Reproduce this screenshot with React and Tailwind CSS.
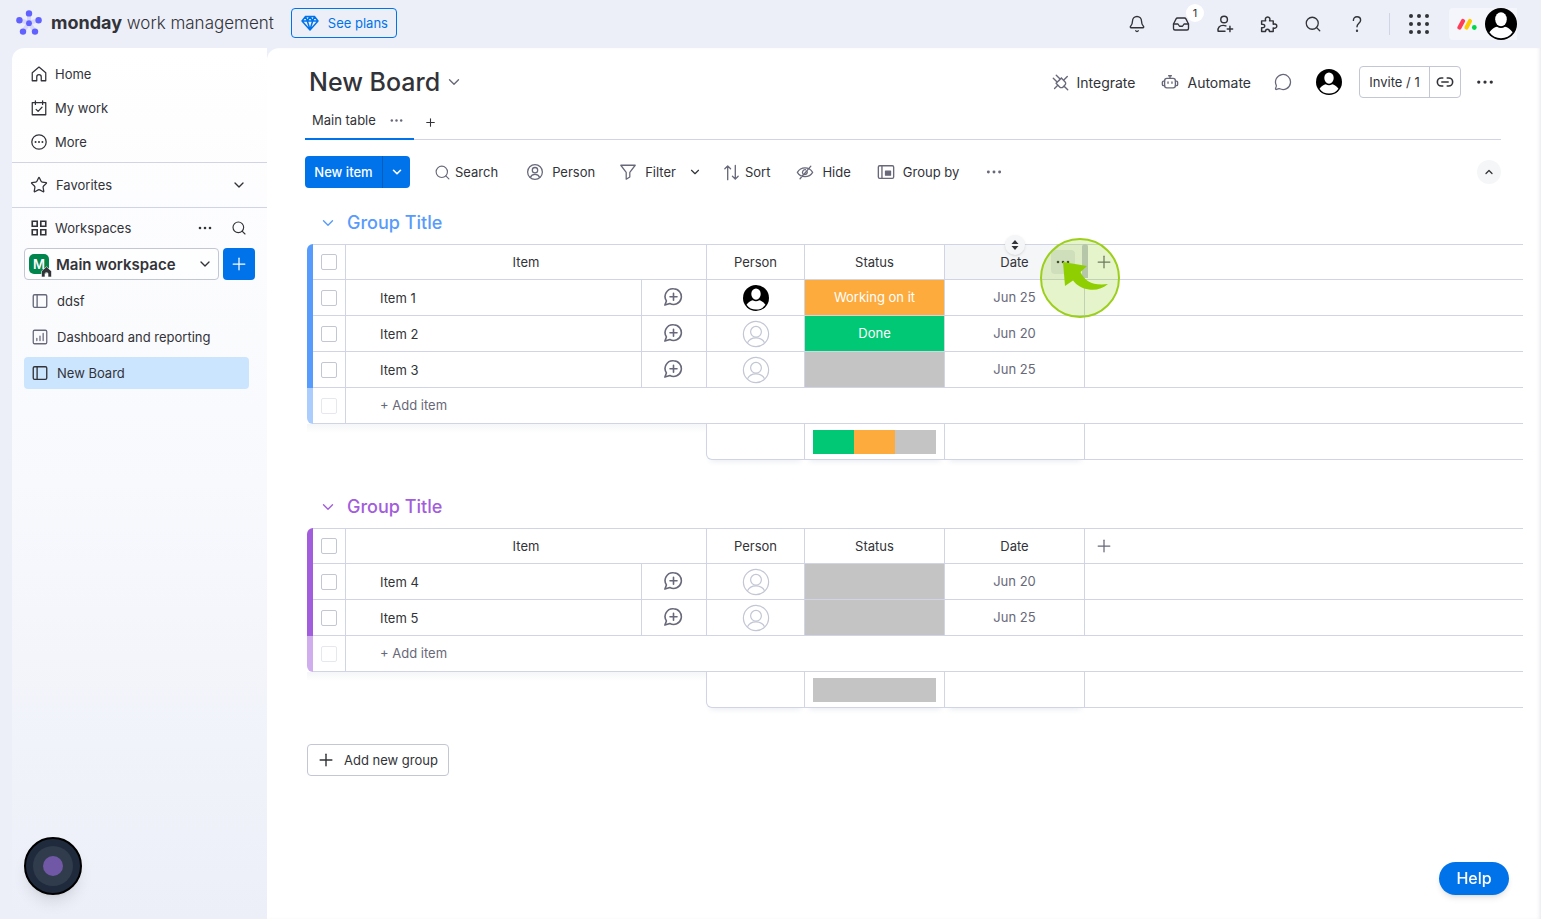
import React, { useState } from 'react';
import { Bell, ChevronDown, ChevronUp, Inbox, MessageCircle, Plus, Search, Star } from 'lucide-react';

const GROUPS = [
  {
    id: 'g1',
    headClass: 'text-[#579bfc]',
    barClass: 'bg-[#579bfc]',
    barLightClass: 'bg-[#abcdfd]',
    activeDate: true,
    items: [
      { name: 'Item 1', person: true, status: 'Working on it', date: 'Jun 25' },
      { name: 'Item 2', person: false, status: 'Done', date: 'Jun 20' },
      { name: 'Item 3', person: false, status: '', date: 'Jun 25' },
    ],
    summary: ['bg-[#00c875]', 'bg-[#fdab3d]', 'bg-[#c4c4c4]'],
  },
  {
    id: 'g2',
    headClass: 'text-[#a25ddc]',
    barClass: 'bg-[#a25ddc]',
    barLightClass: 'bg-[#d0aeed]',
    activeDate: false,
    items: [
      { name: 'Item 4', person: false, status: '', date: 'Jun 20' },
      { name: 'Item 5', person: false, status: '', date: 'Jun 25' },
    ],
    summary: ['bg-[#c4c4c4]'],
  },
];

const STATUS_CLASSES = {
  'Working on it': 'bg-[#fdab3d]',
  Done: 'bg-[#00c875]',
  '': 'bg-[#c4c4c4]',
};

function Svg({ size = 18, width = 1.4, className = '', children }) {
  return (
    <svg
      width={size}
      height={size}
      viewBox="0 0 20 20"
      fill="none"
      stroke="currentColor"
      strokeWidth={width}
      strokeLinecap="round"
      strokeLinejoin="round"
      className={`shrink-0 ${className}`}
      aria-hidden="true"
    >
      {children}
    </svg>
  );
}

function Dots({ size = 16, className = '' }) {
  return (
    <svg width={size} height={size} viewBox="0 0 16 16" fill="currentColor" className={`shrink-0 ${className}`} aria-hidden="true">
      <circle cx="3" cy="8" r="1.3" />
      <circle cx="8" cy="8" r="1.3" />
      <circle cx="13" cy="8" r="1.3" />
    </svg>
  );
}

function Avatar({ className = 'size-8' }) {
  return (
    <svg viewBox="0 0 32 32" className={`shrink-0 ${className}`} aria-hidden="true">
      <circle cx="16" cy="16" r="16" fill="#000" />
      <ellipse cx="16" cy="11.2" rx="5.8" ry="7" fill="#fff" />
      <path d="M4.400 24.300C6.500 21 9.500 19.200 12 18.700c2.600 1.700 5.400 1.700 8 0 2.500.5 5.500 2.300 7.600 5.600A14.300 14.300 0 0 1 16 30.300 14.300 14.300 0 0 1 4.400 24.300Z" fill="#fff" />
    </svg>
  );
}

function EmptyPerson() {
  return (
    <svg viewBox="0 0 28 28" className="size-7" fill="none" stroke="#c3c6d4" strokeWidth="1.2" aria-hidden="true">
      <circle cx="14" cy="14" r="12.6" />
      <circle cx="14" cy="11.800" r="5.400" />
      <path d="M5.500 22.800c1.600-3.400 4.800-5 8.500-5s6.900 1.600 8.500 5" />
    </svg>
  );
}

function BoardIcon({ className }) {
  return (
    <Svg width={1.5} className={className}>
      <rect x="2.500" y="3" width="15" height="14" rx="1.500" />
      <path d="M6.800 3v14" />
    </Svg>
  );
}

function TopBar() {
  return (
    <header className="flex h-12 shrink-0 items-center pl-4 pr-6">
      <div className="flex items-center pb-0.5">
        <svg width="26" height="26" viewBox="0 0 26 26" className="mr-[9px] shrink-0" aria-hidden="true">
          <g stroke="#d5d6fa" strokeWidth="4" strokeLinecap="round">
            <path d="M13 13V3.500M13 13 3.500 10M13 13l9.500-3M13 13l-6 8.500M13 13l6 8.500" />
          </g>
          <g fill="#6161ff">
            <circle cx="13" cy="3.400" r="3.200" />
            <circle cx="3.400" cy="10.300" r="3.200" />
            <circle cx="22.600" cy="10.300" r="3.200" />
            <circle cx="13" cy="13.200" r="2.900" />
            <circle cx="7" cy="21.600" r="3.200" />
            <circle cx="19" cy="21.600" r="3.200" />
          </g>
        </svg>
        <span className="text-[17px] font-light text-[#323338]">
          <strong className="text-[18px] font-bold">monday</strong> work management
        </span>
        <button className="ml-[17px] flex h-[30px] items-center gap-2 rounded border border-[#0073ea] px-2 text-[13px] text-[#0073ea]">
          <Svg size={20} width={1.5}>
            <path d="M5.500 3.500h9l3.500 4.500-8 9-8-9zM2 8h16M7.300 8 10 16.500 12.700 8M5.500 3.500 7.300 8 10 3.500 12.700 8l1.800-4.500" />
          </Svg>
          See plans
        </button>
      </div>

      <nav className="ml-auto flex items-center text-[#323338]">
        <button aria-label="Notifications" className="flex w-11 justify-center"><Bell size={18} strokeWidth={1.800} /></button>
        <button aria-label="Inbox" className="relative flex w-11 justify-center">
          <Inbox size={18} strokeWidth={1.800} />
          <span className="absolute -top-[11px] left-[27px] flex size-[18px] items-center justify-center rounded-full bg-white text-[11px]">1</span>
        </button>
        <button aria-label="Invite members" className="flex w-11 justify-center">
          <Svg size={18} width={1.600}>
            <circle cx="9" cy="5" r="3.700" />
            <path d="M10 18H2.300c-.6-3.600 1.600-6.500 5.700-6.500 1.200 0 2.200.2 3 .6M15.500 12.500v6M12.500 15.500h6" />
          </Svg>
        </button>
        <button aria-label="Apps" className="flex w-11 justify-center">
          <Svg size={18} width={1.600}>
            <path d="M1.800 6.500h4.500c-.8-2.200 0-4.300 2.200-4.300s3 2.100 2.200 4.300h4v3.800c2-.8 4 0 4 2s-2 2.800-4 2v4h-4.200c0-1.600-.8-2.500-2.200-2.500s-2.200.9-2.200 2.500H1.800v-4.200c2.200.2 3.500-.5 3.500-1.900s-1.300-2.100-3.500-1.900z" />
          </Svg>
        </button>
        <button aria-label="Search everything" className="flex w-11 justify-center"><Search size={18} strokeWidth={1.700} /></button>
        <button aria-label="Help center" className="flex w-11 justify-center">
          <Svg size={18} width={1.600}>
            <path d="M6 6c0-2.500 1.700-4 4-4s4 1.600 4 3.800c0 3.300-4 3.500-4 7.200" />
            <circle cx="10" cy="17.500" r=".5" fill="currentColor" />
          </Svg>
        </button>
        <span className="ml-2.5 mr-[7px] h-[22px] w-px bg-[#d0d4e4]" />
        <button aria-label="Products" className="flex w-11 justify-center">
          <svg width="20" height="20" viewBox="0 0 20 20" fill="currentColor" aria-hidden="true">
            {[2, 10, 18].map((x) => [2, 10, 18].map((y) => <circle key={`${x}-${y}`} cx={x} cy={y} r="2" />))}
          </svg>
        </button>
        <button aria-label="Account" className="ml-2 flex h-8 items-center gap-2 rounded-l bg-[#f5f6fb] pl-2">
          <svg width="20" height="14" viewBox="0 0 20 14" aria-hidden="true">
            <path d="M2.500 10.500 6 4" stroke="#ff3d57" strokeWidth="4.200" strokeLinecap="round" />
            <path d="M9.500 10.500 13 4" stroke="#ffcb00" strokeWidth="4.200" strokeLinecap="round" />
            <circle cx="17.300" cy="10.500" r="2.400" fill="#00d647" />
          </svg>
          <Avatar className="size-8" />
        </button>
      </nav>
    </header>
  );
}

function Sidebar() {
  return (
    <aside className="ml-3 w-[255px] shrink-0 rounded-tl-xl bg-gradient-to-b from-white via-[#f8f9fd] to-[#eceff8] pt-[9px] text-[13px] text-[#323338]">
      <nav className="mb-[3px] pl-[18px]">
        <a href="#home" className="flex h-[34px] items-center gap-[7px]">
          <Svg><path d="M2.500 8.500 10 2.300l7.500 6.200v9h-5v-4.300a2.500 2.500 0 0 0-5 0v4.300h-5z" /></Svg>
          Home
        </a>
        <a href="#my-work" className="flex h-[34px] items-center gap-[7px]">
          <Svg><path d="M2.500 4h15v13.500h-15zM6 2v4M14 2v4M6.800 11.500l2.200 2.200 4.300-4.500" /></Svg>
          My work
        </a>
        <a href="#more" className="flex h-[34px] items-center gap-[7px]">
          <Svg>
            <circle cx="10" cy="10" r="8" />
            <g fill="currentColor" stroke="none">
              <circle cx="6.200" cy="10" r="1.100" />
              <circle cx="10" cy="10" r="1.100" />
              <circle cx="13.800" cy="10" r="1.100" />
            </g>
          </Svg>
          More
        </a>
      </nav>

      <button className="flex h-[46px] w-full items-center gap-2 border-y border-[#d0d4e4] pl-[18px] pr-5">
        <Star size={18} strokeWidth={1.700} />
        Favorites
        <ChevronDown size={16} strokeWidth={2} className="ml-auto" />
      </button>

      <div className="flex h-10 items-center pl-[18px] pr-5">
        <Svg width={1.800}>
          <path d="M2.500 2.500h5.500v5.500H2.500zM12 2.500h5.500v5.500H12zM2.500 12h5.500v5.500H2.500zM12 12h5.500v5.500H12z" strokeLinejoin="miter" />
        </Svg>
        <span className="ml-[7px]">Workspaces</span>
        <button aria-label="Workspace options" className="ml-auto"><Dots /></button>
        <button aria-label="Search workspace" className="ml-[18px]"><Search size={16} strokeWidth={1.700} /></button>
      </div>

      <div className="flex gap-1 px-3">
        <button className="flex h-8 w-[195px] items-center rounded border border-[#c3c6d4] bg-white/60 pl-1 pr-[5px]">
          <span className="relative flex size-5 items-center justify-center rounded-[5px] bg-[#00854d] text-[13px] font-semibold text-white">
            M
            <svg width="11" height="11" viewBox="0 0 11 11" className="absolute -bottom-[3px] -right-[3px]" aria-hidden="true">
              <path d="M.5 5.200 5.500.7l5 4.500V11H7V8a1.500 1.500 0 0 0-3 0v3H.5z" fill="#323338" stroke="#fff" strokeWidth=".6" />
            </svg>
          </span>
          <span className="ml-[7px] text-[15px] font-semibold">Main workspace</span>
          <ChevronDown size={16} strokeWidth={2} className="ml-auto" />
        </button>
        <button aria-label="Add to workspace" className="flex size-8 items-center justify-center rounded bg-[#0073ea] text-white">
          <Plus size={20} strokeWidth={1.500} />
        </button>
      </div>

      <nav className="mt-[5px] flex flex-col gap-1 pl-3 pr-[18px]">
        <a href="#ddsf" className="flex h-8 items-center gap-2 rounded pl-[7px]"><BoardIcon className="text-[#676879]" />ddsf</a>
        <a href="#dashboard" className="flex h-8 items-center gap-2 rounded pl-[7px]">
          <Svg className="text-[#676879]">
            <rect x="2.500" y="2.500" width="15" height="15" rx="1.500" />
            <path d="M6.500 14v-2.500M10 14V9M13.500 14V6" />
          </Svg>
          Dashboard and reporting
        </a>
        <a href="#new-board" className="flex h-8 items-center gap-2 rounded bg-[#cce5ff] pl-[7px]"><BoardIcon />New Board</a>
      </nav>
    </aside>
  );
}

function BoardHeader() {
  return (
    <div className="flex h-[60px] items-center pl-[42px] pr-[46px] pt-2 text-[#323338]">
      <h1 className="text-[25px] font-medium">New Board</h1>
      <ChevronDown size={18} strokeWidth={1.800} className="ml-[5px] text-[#676879]" />
      <button className="ml-auto flex items-center gap-2 text-sm leading-[19px]">
        <Svg size={17} width={1.600} className="text-[#676879]">
          <path d="M11 4.800 15.200 9c1.200 1.200 1.200 2.800 0 4l-2.200 2.200c-1.200 1.200-2.800 1.200-4 0L4.800 11zM4.800 11l3-3M11 4.800 8 8M5 1.500l4.500 4.500M1.500 5 6 9.500M14.500 6.500 18 3M3 17l3.500-3.500M14 14l4.500 4.500" />
        </Svg>
        Integrate
      </button>
      <button className="ml-[26px] flex items-center gap-2 text-sm leading-[19px]">
        <Svg width={1.500} className="text-[#676879]">
          <rect x="4" y="6" width="12" height="10.500" rx="2.500" />
          <path d="M10 3v3M8.500 3h3M4 9H2.800c-.8 0-1.300.5-1.300 1.300v2.400c0 .8.500 1.300 1.300 1.300H4M16 9h1.200c.8 0 1.300.5 1.300 1.300v2.400c0 .8-.5 1.300-1.300 1.300H16M7.800 10v1.500M12.200 10v1.500" />
        </Svg>
        Automate
      </button>
      <button aria-label="Discussion" className="ml-[23px] text-[#676879]"><MessageCircle size={18} strokeWidth={1.700} /></button>
      <button aria-label="Owner" className="ml-6"><Avatar className="size-[26px]" /></button>
      <div className="ml-[17px] flex h-8 items-center rounded border border-[#c3c6d4] text-[13px]">
        <button className="flex h-full w-[70px] items-center justify-center border-r border-[#c3c6d4]">Invite / 1</button>
        <button aria-label="Copy link" className="flex h-full w-[30px] items-center justify-center">
          <Svg width={1.800}>
            <path d="M7.500 5.500H6a4.500 4.500 0 0 0 0 9h1.500M12.500 5.500H14a4.500 4.500 0 0 1 0 9h-1.500M6.500 10h7" />
          </Svg>
        </button>
      </div>
      <button aria-label="Board options" className="ml-3.5"><Dots size={20} /></button>
    </div>
  );
}

function ToolButton({ icon, label, wide }) {
  return (
    <button className={`flex items-center ${wide ? 'gap-2' : 'gap-1'}`}>
      {icon}
      {label}
    </button>
  );
}

function Toolbar() {
  return (
    <div className="flex h-8 items-center text-[13px] leading-5 text-[#323338]">
      <div className="flex h-8 overflow-hidden rounded bg-[#0073ea] text-white">
        <button className="w-[77px] font-medium">New item</button>
        <button aria-label="More item types" className="flex w-7 items-center justify-center border-l border-[#0060b9]">
          <ChevronDown size={14} strokeWidth={2.800} />
        </button>
      </div>
      <div className="ml-6 flex items-center gap-7">
        <ToolButton label="Search" icon={<Search size={17} strokeWidth={1.600} className="text-[#676879]" />} />
        <ToolButton
          wide
          label="Person"
          icon={
            <Svg className="text-[#676879]">
              <circle cx="10" cy="10" r="8.200" />
              <circle cx="10" cy="8" r="3" />
              <path d="M4.800 16c1-2.300 2.800-3.300 5.200-3.300s4.200 1 5.200 3.300" />
            </Svg>
          }
        />
        <div className="-ml-1 flex items-center">
          <ToolButton
            wide
            label="Filter"
            icon={<Svg className="text-[#676879]"><path d="M2 2.500h16l-6 8v5l-4 2.500v-7.500z" /></Svg>}
          />
          <button aria-label="Filter options" className="ml-3"><ChevronDown size={14} strokeWidth={2} /></button>
        </div>
      </div>
      <div className="ml-5 flex items-center gap-[26px]">
        <ToolButton
          label="Sort"
          icon={<Svg size={19} className="text-[#676879]"><path d="M6 17.500V3M3 6l3-3 3 3M14 2.500V17M11 14l3 3 3-3" /></Svg>}
        />
        <ToolButton
          wide
          label="Hide"
          icon={
            <Svg className="text-[#676879]">
              <path d="M1.500 10.500C3.500 7.200 6.500 5.500 10 5.500s6.500 1.700 8.500 5c-2 3.300-5 4.700-8.500 4.700s-6.500-1.400-8.500-4.700zM4.500 17.500 16.500 3.500M10.500 7.500a3 3 0 0 0-2.700 4.800M12.500 9.500a3 3 0 0 1-3 3.500" />
            </Svg>
          }
        />
        <ToolButton
          wide
          label="Group by"
          icon={
            <Svg width={1.500} className="text-[#676879]">
              <rect x="1.500" y="3" width="17" height="14" rx="1.500" />
              <path d="M5.500 3v14" />
              <rect x="9.500" y="9" width="5.500" height="4.500" fill="currentColor" />
            </Svg>
          }
        />
        <button aria-label="More tools" className="text-[#676879]"><Dots size={18} /></button>
      </div>
      <button aria-label="Collapse header" className="ml-auto flex size-6 items-center justify-center rounded-full bg-[#f5f6f8]">
        <ChevronUp size={12} strokeWidth={2.500} />
      </button>
    </div>
  );
}

function Checkbox({ label, faded }) {
  return (
    <input
      type="checkbox"
      aria-label={label}
      disabled={faded}
      className={`mx-auto block size-4 appearance-none rounded-[2px] border border-[#c3c6d4] bg-white ${faded ? 'opacity-40' : ''}`}
    />
  );
}

function ClickMarker() {
  return (
    <span className="pointer-events-none absolute -top-[7px] left-[95px] z-20 flex size-20 items-center justify-center rounded-full border-2 border-[#9ccf1c] bg-[#82c800]/20">
      <svg width="80" height="80" viewBox="0 0 80 80" className="shrink-0" aria-hidden="true">
        <path d="M23 24 47 28l-6.500 6c4 9.500 13 14 27.500 12-5 4.500-12 6.500-19 5.500-7-1-12-4-16-9L25 48z" fill="#8fce00" />
      </svg>
    </span>
  );
}

const line = 'border-[#d0d4e4]';
const footShadow = 'shadow-[0_5px_6px_-4px_#e6e9ef]';

function GroupTable({ group }) {
  const [open, setOpen] = useState(true);

  return (
    <section className="mb-7">
      <h2 className={`mb-1 flex h-9 items-center gap-2.5 pl-3 pt-0.5 text-[18px] font-medium leading-5 ${group.headClass}`}>
        <button aria-label="Collapse group" onClick={() => setOpen(!open)}>
          <ChevronDown size={18} strokeWidth={1.800} />
        </button>
        Group Title
      </h2>
      {open && (
        <table className="w-full table-fixed border-separate border-spacing-0 text-center text-[13px] text-[#323338]">
          <colgroup>
            <col className="w-1.5" />
            <col className="w-[33px]" />
            <col className="w-[296px]" />
            <col className="w-[65px]" />
            <col className="w-[98px]" />
            <col className="w-[140px]" />
            <col className="w-[140px]" />
            <col />
          </colgroup>
          <thead>
            <tr className="h-9 [&>th]:p-0 [&>th]:font-normal">
              <th className={`rounded-tl-md ${group.barClass}`} />
              <th className={`border-y border-r ${line}`}><Checkbox label="Select all items" /></th>
              <th colSpan={2} className={`border-y border-r ${line}`}>Item</th>
              <th className={`border-y border-r ${line}`}>Person</th>
              <th className={`border-y border-r ${line}`}>Status</th>
              <th className={`relative border-y border-r ${line} ${group.activeDate ? 'bg-[#f5f6f8]' : ''}`}>
                Date
                {group.activeDate && (
                  <>
                    <button aria-label="Sort by date" className="absolute -top-[10px] left-[60px] flex size-5 items-center justify-center rounded-full bg-[#f5f6f8] shadow-sm">
                      <svg width="8" height="10" viewBox="0 0 8 10" fill="currentColor" aria-hidden="true">
                        <path d="M4 0 7.500 4h-7zM4 10 .5 6h7z" />
                      </svg>
                    </button>
                    <button aria-label="Column options" className="absolute right-[9px] top-[5px] flex size-6 items-center justify-center rounded bg-[#e4e5ea]">
                      <Dots />
                    </button>
                    <span className="absolute -right-1 -top-px h-[34px] w-1.5 rounded-t bg-[#c3c6d4]" />
                    <ClickMarker />
                  </>
                )}
              </th>
              <th className={`border-y ${line}`}>
                <button aria-label="Add column" className="ml-[9px] block text-[#676879]"><Plus size={20} strokeWidth={1.500} /></button>
              </th>
            </tr>
          </thead>
          <tbody>
            {group.items.map((item) => (
              <tr key={item.name} className="h-9 [&>td]:p-0">
                <td className={group.barClass} />
                <td className={`border-b border-r ${line}`}><Checkbox label={`Select ${item.name}`} /></td>
                <td className={`border-b border-r text-left ${line}`}><div className="pl-[34px] pt-0.5">{item.name}</div></td>
                <td className={`border-b border-r ${line}`}>
                  <button aria-label={`Start a conversation on ${item.name}`} className="mx-auto block pb-0.5 pr-0.5 text-[#676879]">
                    <Svg size={20} width={1.600}>
                      <path d="M10.500 1.800a7.800 7.800 0 1 1-3.600 14.700l-5 1.600 1.500-4.200A7.800 7.800 0 0 1 10.500 1.800zM10.500 6.200v7M7 9.700h7" />
                    </Svg>
                  </button>
                </td>
                <td className={`border-b border-r ${line}`}>
                  <span className="flex justify-center">{item.person ? <Avatar className="size-[26px]" /> : <EmptyPerson />}</span>
                </td>
                <td className={`border-b border-r text-white ${line} ${STATUS_CLASSES[item.status]}`}>{item.status}</td>
                <td className={`border-b border-r text-[#676879] ${line}`}>{item.date}</td>
                <td className={`border-b ${line}`} />
              </tr>
            ))}
            <tr className="h-9 [&>td]:p-0">
              <td className={`rounded-bl-md ${group.barLightClass}`} />
              <td className={`border-b border-r ${line}`}><Checkbox label="New item" faded /></td>
              <td colSpan={6} className={`border-b text-left ${line}`}>
                <button className="pl-[34px] text-[#676879]">+ Add item</button>
              </td>
            </tr>
          </tbody>
          <tfoot>
            <tr className="h-9 [&>td]:p-0">
              <td colSpan={4} className="bg-gradient-to-b from-[#f5f6f8] from-0% to-white to-25%" />
              <td>
                <div className={`-ml-px h-9 rounded-bl-md border-x border-b bg-white ${line} ${footShadow}`} />
              </td>
              <td className={`border-b border-r ${line} ${footShadow}`}>
                <div className="flex h-6 px-2">
                  {group.summary.map((color) => <span key={color} className={`flex-1 ${color}`} />)}
                </div>
              </td>
              <td className={`border-b border-r ${line} ${footShadow}`} />
              <td className={`border-b ${line}`} />
            </tr>
          </tfoot>
        </table>
      )}
    </section>
  );
}

export default function App() {
  return (
    <div className="flex min-h-screen flex-col bg-[#eceff8] font-['Inter',sans-serif] leading-[19px]">
      <TopBar />
      <div className="flex flex-1">
        <Sidebar />
        <main className="min-w-0 flex-1 rounded-tl-xl bg-white shadow-[inset_-3px_0_4px_-2px_#e4e5ea]">
          <BoardHeader />
          <div className="pl-[38px] pr-10">
            <div className="flex h-8 items-stretch border-b border-[#d0d4e4] text-[13px] text-[#323338]">
              <div className="-mb-px flex w-[109px] items-center justify-between border-b-2 border-[#0073ea] pb-1.5 pl-[7px] pr-2.5">
                <a href="#main-table">Main table</a>
                <button aria-label="Tab options" className="text-[#676879]"><Dots size={15} /></button>
              </div>
              <button aria-label="Add view" className="ml-2.5 pb-0.5"><Plus size={13} strokeWidth={2} /></button>
            </div>
            <div className="mt-4">
              <Toolbar />
            </div>
          </div>
          <div className="mt-4 pl-10 pr-[18px]">
            {GROUPS.map((group) => <GroupTable key={group.id} group={group} />)}
            <button className="mt-9 flex h-8 w-[142px] items-center gap-2 rounded border border-[#c3c6d4] pl-2 text-[13px] text-[#323338]">
              <Plus size={20} strokeWidth={1.700} />
              Add new group
            </button>
          </div>
        </main>
      </div>

      <button aria-label="Record" className="fixed bottom-6 left-6 flex size-[58px] items-center justify-center rounded-full border-2 border-black bg-[#1f2a3d] shadow-lg">
        <span className="flex size-10 items-center justify-center rounded-full bg-[#303c4c]">
          <span className="size-5 rounded-full bg-[#7158a6]" />
        </span>
      </button>
      <button className="fixed bottom-6 right-8 h-[33px] w-[70px] rounded-full bg-[#0073ea] text-[16px] font-medium text-white shadow-md">Help</button>
    </div>
  );
}
